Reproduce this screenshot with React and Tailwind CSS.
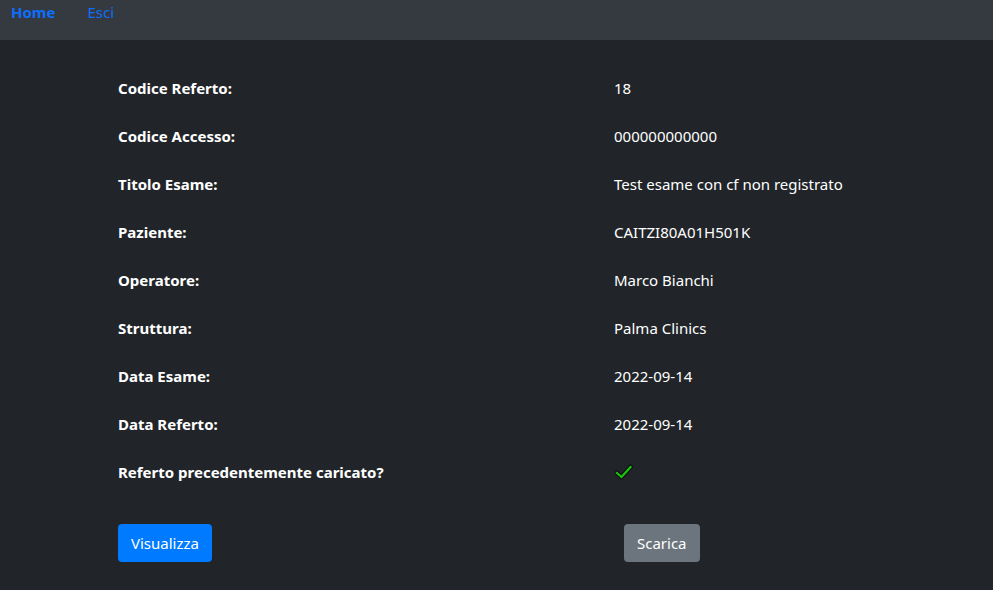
const rows = [
  ['Codice Referto:', '18'],
  ['Codice Accesso:', '000000000000'],
  ['Titolo Esame:', 'Test esame con cf non registrato'],
  ['Paziente:', 'CAITZI80A01H501K'],
  ['Operatore:', 'Marco Bianchi'],
  ['Struttura:', 'Palma Clinics'],
  ['Data Esame:', '2022-09-14'],
  ['Data Referto:', '2022-09-14'],
]

function Check() {
  return (
    <svg width="18" height="16" viewBox="0 0 18 16" className="ml-[1px]">
      <path d="M2 9 L6.5 13 L15.5 3" fill="none" stroke="#111" strokeWidth="4.5" strokeLinecap="square" />
      <path d="M2 9 L6.5 13 L15.5 3" fill="none" stroke="#16c60c" strokeWidth="2.2" strokeLinecap="square" />
    </svg>
  )
}

export default function App() {
  return (
    <div className="min-h-[590px] bg-[#212529] text-white text-[15px]" style={{ fontFamily: '"Noto Sans", "Open Sans", sans-serif' }}>
      <nav className="h-10 bg-[#343a40] flex items-start pt-[2px] pl-[11px] gap-8">
        <a className="font-bold text-[#0d6efd] leading-5">Home</a>
        <a className="text-[#0d6efd] leading-5">Esci</a>
      </nav>

      <div className="pl-[118px] pt-6">
        <div className="grid grid-cols-[496px_1fr]">
          {rows.map(([k, v]) => (
            <div key={k} className="contents">
              <div className="h-12 flex items-center font-bold">{k}</div>
              <div className="h-12 flex items-center">{v}</div>
            </div>
          ))}
          <div className="h-12 flex items-center font-bold">Referto precedentemente caricato?</div>
          <div className="h-12 flex items-center"><Check /></div>
        </div>

        <div className="grid grid-cols-[506px_1fr] mt-7">
          <div>
            <button className="h-[38px] px-[13px] rounded bg-[#007bff] text-white">Visualizza</button>
          </div>
          <div>
            <button className="h-[38px] px-[13px] rounded bg-[#6c757d] text-white">Scarica</button>
          </div>
        </div>
      </div>
    </div>
  )
}
